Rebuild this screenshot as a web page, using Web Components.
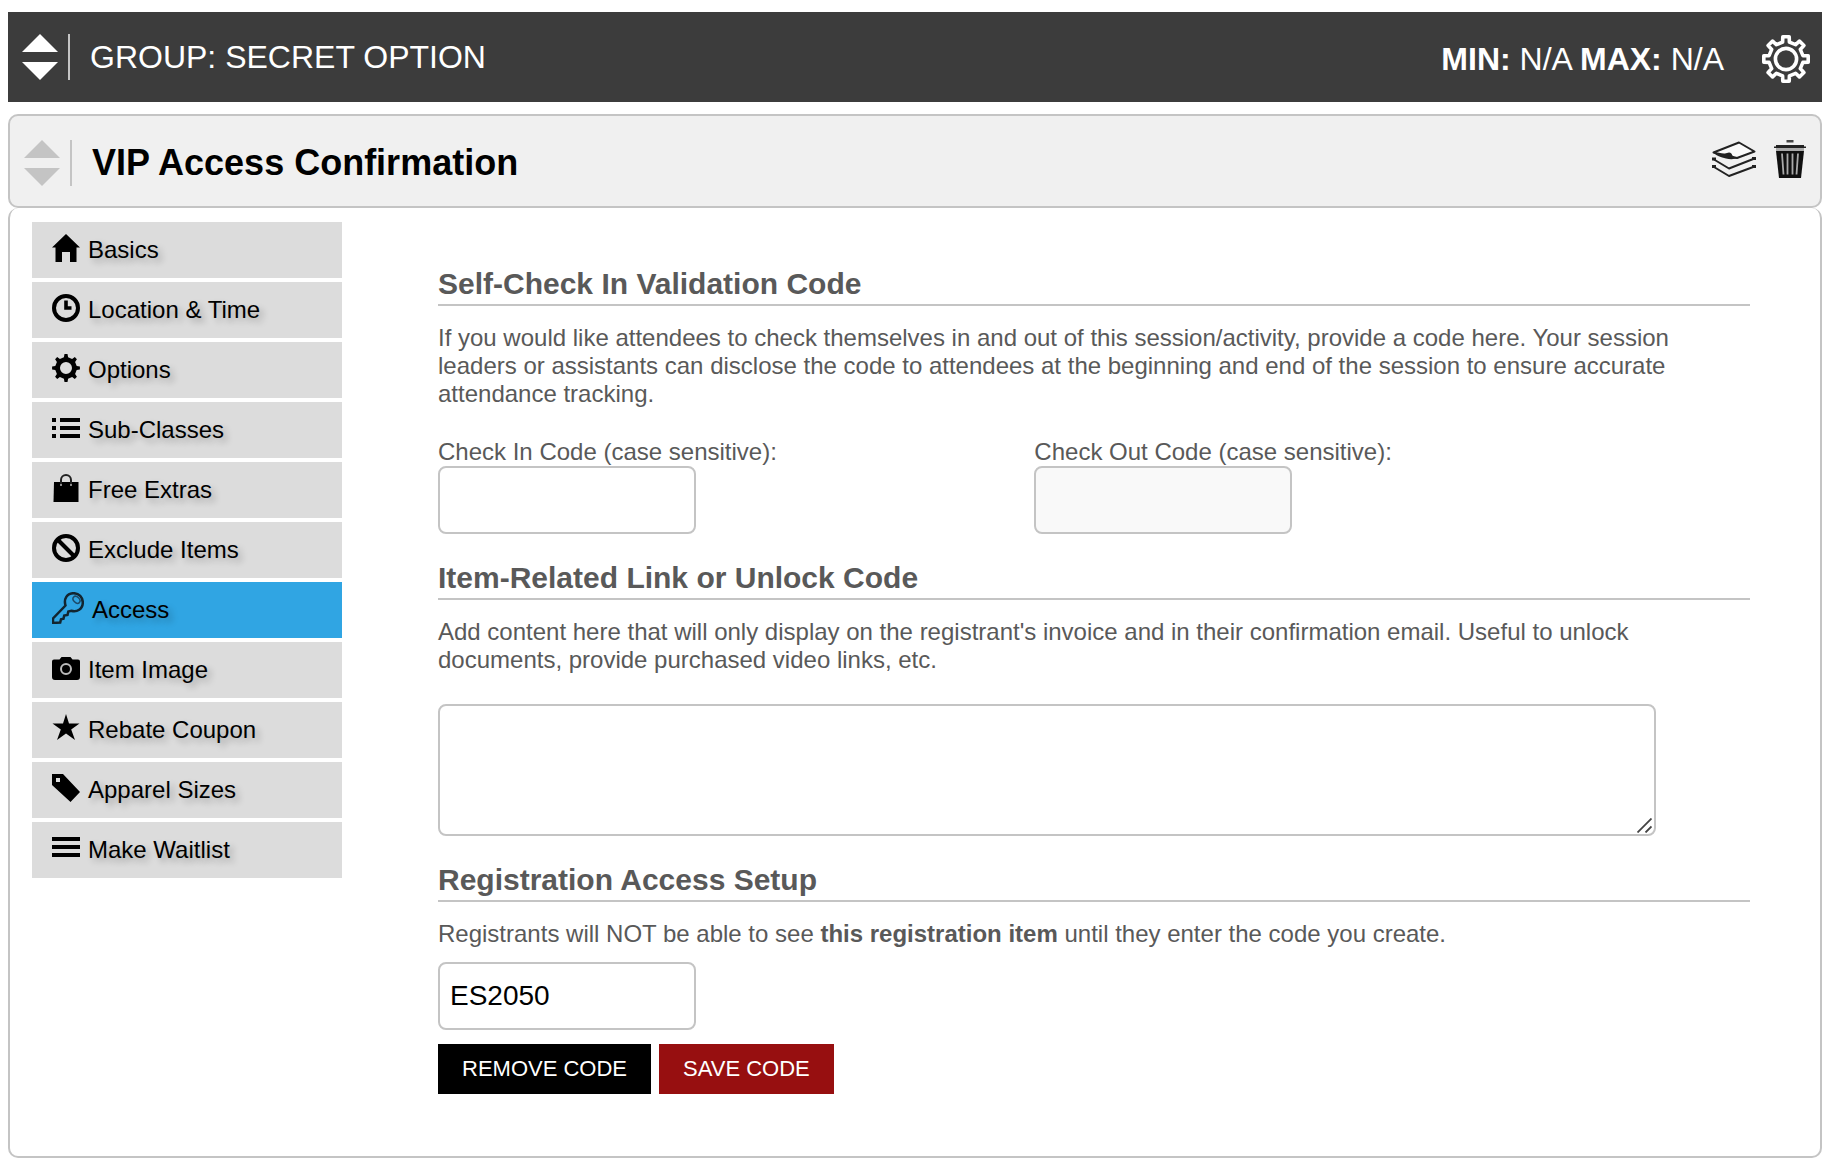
<!DOCTYPE html>
<html lang="en">
<head>
<meta charset="utf-8">
<meta name="viewport" content="width=device-width, initial-scale=1">
<title>VIP Access Confirmation</title>
<style>
  :root { --line: #c4c4c4; --text: #595959; }
  body { margin: 12px 14px 10px 8px; background: #fff; font: 24px/28px "Liberation Sans", Arial, Helvetica, sans-serif; color: var(--text); }
</style>
</head>
<body>
<access-page></access-page>

<script>
(function () {
  // toothed ring outline; tip/root = half widths as a share of one tooth pitch
  function gear(c, n, ro, ri, tip, root) {
    const pts = [], step = Math.PI * 2 / n;
    for (let i = 0; i < n; i++) {
      const a = i * step - Math.PI / 2;
      for (const [r, d] of [[ri, -root], [ro, -tip], [ro, tip], [ri, root]]) pts.push((c + r * Math.cos(a + d * step)).toFixed(1) + " " + (c + r * Math.sin(a + d * step)).toFixed(1));
    }
    return "M" + pts.join("L") + "Z";
  }

  // name: [width, height, markup]
  const ICONS = {
    settings: [48, 48, `<g fill="none" stroke="#fff" stroke-width="3.6" stroke-linejoin="round"><path d="${gear(24, 8, 22.4, 17.2, .18, .25)}"/><circle cx="24" cy="24" r="10.6"/></g>`],
    layers: [44, 36, `<g fill="none" stroke="#222" stroke-width="2" stroke-linejoin="round"><path d="M1.500 11.500 27 1.500 42.500 10.500 25 17z" fill="#fafafa"/><path d="M2 18.500 17 27.500 42.500 17.500M2 26 17 35 42.500 25.500"/></g><path d="M1 11.500Q9 14 17 11.500 20 12 20 14 22 17 27 17 20 19 14 17.500 6 16 1 11.500z" fill="#222"/><path d="M0 16.500h4v3H0zM40 16h4v3h-4zM0 24h4v3H0zM40 24h4v3h-4z" fill="#222"/>`],
    trash: [32, 40, `<path d="M12.500 1h7v2.500h-7z" fill="#444"/><path d="M2 6h28v2H2zM0 7.500h32V9H0z" fill="#222"/><path d="M2 9h28v3H2z" fill="#aaa"/><path d="M2 12h28l-3 27H5z" fill="#111"/><path d="M8 14.500l1.500 21M13.500 14.500v21M18.500 14.500v21M24 14.500l-1.500 21" stroke="#aaa" stroke-width="1.800" fill="none"/>`],
    home: [28, 28, `<path d="M14 0 28 13.500h-3.500V28H18V18h-8v10H3.500V13.500H0z"/>`],
    clock: [28, 28, `<circle cx="14" cy="14" r="12" fill="none" stroke="#000" stroke-width="4"/><path d="M14 6.500V14h5.500" fill="none" stroke="#000" stroke-width="3.600"/>`],
    cog: [28, 28, `<path fill-rule="evenodd" d="${gear(14, 8, 14, 10.9, .14, .25)}M14 8a6 6 0 1 0 0 12 6 6 0 0 0 0-12z"/>`],
    list: [28, 28, `<path d="M0 4h4v4H0zM8 4h20v4H8zM0 12h4v4H0zM8 12h20v4H8zM0 20h4v4H0zM8 20h20v4H8z"/>`],
    bag: [28, 28, `<path d="M2 8h24.500v20H1.500z"/><path d="M9 11V6a5 5 0 0 1 10 0v5" fill="none" stroke="#222" stroke-width="2"/><path d="M8.200 10h1.600v2H8.200zM18.200 10h1.600v2h-1.600z" fill="#aaa"/>`],
    ban: [28, 28, `<circle cx="14" cy="14" r="12" fill="none" stroke="#000" stroke-width="4"/><path d="M5.500 5.500l17 17" stroke="#000" stroke-width="4"/>`],
    key: [32, 32, `<path d="M13.500 13.500C11.500 7 15 1.200 21.500 1.200c5.500 0 9.300 4 9.300 9.300 0 6.500-5.800 10-11.500 8.300l-3 .7-.8 3.500-3.300.6-.7 3.200-2.500.5-.8 3.200L1 31v-4.500z" fill="none" stroke="#122530" stroke-width="2.500"/><ellipse cx="24.500" cy="7.800" rx="4" ry="2.800" transform="rotate(45 24.500 7.800)" fill="none" stroke="#1d4a68" stroke-width="1.500"/>`],
    camera: [28, 28, `<path d="M2 5.500h5.500l2-2.500h9l2 2.500H26q2 0 2 2V23q0 3-3 3H3q-3 0-3-3V7.500q0-2 2-2z"/><circle cx="14" cy="15" r="5" fill="none" stroke="#bbb" stroke-width="2"/>`],
    star: [28, 28, `<path d="M14 0l3 9.500h10.500L19.200 15.500 23 26l-9-6.500L5 26l3.800-10.500L.5 9.500H11z"/>`],
    tag: [28, 28, `<path fill-rule="evenodd" d="M0 0h11l17 18-9.500 10L0 11zM4 4v4h4V4z"/>`],
    bars: [28, 28, `<path d="M0 3h28v4H0zM0 11h28v4H0zM0 19h28v4H0z"/>`],
    grip: [15, 15, `<path d="M.5 14.500l14-14M8.500 14.500l6-6" stroke="#444" stroke-width="1.800"/>`],
  };

  // small helper: open shadow root, box-sizing for all, then the element's own css and markup
  class Base extends HTMLElement {
    connectedCallback() {
      if (this.shadowRoot) return;
      this.attachShadow({ mode: "open" }).innerHTML = `<style>*,*::before,*::after{box-sizing:border-box}${this.css()}</style>${this.html()}`;
    }
    css() { return ":host{display:block}"; }
    html() { return "<slot></slot>"; }
    attr(n) { return this.getAttribute(n) || ""; }
  }

  customElements.define("ui-icon", class extends Base {
    css() { return `:host{display:block;flex:none} svg{display:block}`; }
    html() { const [w, h, body] = ICONS[this.attr("name")]; return `<svg width="${w}" height="${h}" viewBox="0 0 ${w} ${h}" aria-hidden="true">${body}</svg>`; }
  });

  customElements.define("drag-handle", class extends Base {
    css() {
      return `
        :host{display:flex;flex:none;align-items:center;gap:10px;color:#fff}
        button{display:block;padding:0;border:0;background:none;color:inherit;cursor:move}
        svg{display:block;fill:currentColor}
        i{width:2px;height:46px;background:var(--line)}`;
    }
    html() { return `<button aria-label="Move"><svg width="36" height="46"><path d="M18 0l18 18H0zM0 28h36L18 46z"/></svg></button><i></i>`; }
  });

  customElements.define("group-header", class extends Base {
    css() {
      return `
        :host{display:flex;align-items:center;min-height:90px;padding:0 12px 0 14px;background:#3c3c3c;color:#fff;font-size:32px;line-height:36px}
        h1{flex:1;margin:0 0 0 20px;font:inherit}
        .side{display:flex;align-items:center;gap:38px;padding-top:4px}
        button{padding:0;border:0;background:none;cursor:pointer}`;
    }
    html() { return `<drag-handle></drag-handle><h1>${this.attr("heading")}</h1><div class="side"><span><slot></slot></span><button aria-label="Group settings"><ui-icon name="settings"></ui-icon></button></div>`; }
  });

  customElements.define("item-header", class extends Base {
    css() {
      return `
        :host{display:flex;align-items:center;min-height:94px;margin-top:12px;padding:0 14px;border:2px solid var(--line);border-radius:10px;background:#f0f0f0;box-sizing:border-box}
        drag-handle{color:var(--line);padding-top:4px}
        h2{flex:1;margin:0 0 0 20px;padding-top:4px;font-size:36px;line-height:40px;color:#000}
        .side{display:flex;align-items:center;gap:18px;padding-bottom:4px}
        button{padding:0;border:0;background:none;cursor:pointer}`;
    }
    html() { return `<drag-handle></drag-handle><h2><slot></slot></h2><div class="side"><button aria-label="Duplicate"><ui-icon name="layers"></ui-icon></button><button aria-label="Delete"><ui-icon name="trash"></ui-icon></button></div>`; }
  });

  customElements.define("menu-link", class extends Base {
    css() {
      return `
        :host{display:block}
        a{display:flex;align-items:center;gap:8px;min-height:56px;padding:0 20px;background:#dcdcdc;color:#000;text-decoration:none;text-shadow:4px 4px 6px rgba(0,0,0,.25)}
        :host([active]) a{background:#30a5e3}
        ui-icon{padding-bottom:4px}`;
    }
    html() { return `<a href="#${this.attr("icon")}"${this.hasAttribute("active") ? ' aria-current="page"' : ""}><ui-icon name="${this.attr("icon")}"></ui-icon><slot></slot></a>`; }
  });

  customElements.define("side-menu", class extends Base {
    css() { return `:host{display:block;flex:0 0 310px} nav{display:flex;flex-direction:column;gap:4px}`; }
    html() { return `<nav aria-label="Item settings"><slot></slot></nav>`; }
  });

  customElements.define("form-section", class extends Base {
    css() {
      return `
        :host{display:block}
        h3{margin:0 0 18px;padding-bottom:2px;border-bottom:2px solid var(--line);font-size:30px;line-height:36px}
        ::slotted(p){margin:0}`;
    }
    html() { return `<section><h3>${this.attr("heading")}</h3><slot></slot></section>`; }
  });

  customElements.define("code-field", class extends Base {
    css() {
      return `
        :host{display:block}
        label{display:block}
        input{display:block;width:258px;max-width:100%;height:68px;padding:0 10px;border:2px solid var(--line);border-radius:8px;background:#fff;color:#000;font:28px "Liberation Sans",Arial,sans-serif}
        input:disabled{background:#f9f9f9}`;
    }
    html() {
      const label = this.attr("label");
      return `${label ? `<label for="in">${label}</label>` : ""}<input id="in" type="text" value="${this.attr("value")}"${label ? "" : ' aria-label="Access code"'}${this.hasAttribute("disabled") ? " disabled" : ""}>`;
    }
  });

  customElements.define("content-box", class extends Base {
    css() {
      return `
        :host{display:block;position:relative;width:calc(100% - 94px)}
        textarea{display:block;width:100%;height:132px;padding:10px;border:2px solid var(--line);border-radius:8px;background:#fff;color:#000;font:inherit;resize:vertical}
        textarea::-webkit-resizer{background:transparent}
        ui-icon{position:absolute;right:4px;bottom:3px;pointer-events:none}`;
    }
    html() { return `<textarea aria-label="Item-related link or unlock code"></textarea><ui-icon name="grip"></ui-icon>`; }
  });

  customElements.define("action-button", class extends Base {
    css() {
      return `
        :host{display:block}
        button{display:block;height:50px;padding:0 24px;border:0;background:#000;color:#fff;font:22px "Liberation Sans",Arial,sans-serif;cursor:pointer}
        :host([kind=save]) button{background:#970f10}`;
    }
    html() { return `<button type="button"><slot></slot></button>`; }
  });

  customElements.define("access-page", class extends Base {
    css() {
      return `
        :host{display:block}
        main{display:flex;gap:96px;padding:14px 70px 62px 22px;border:2px solid var(--line);border-top:0;border-radius:10px}
        .content{flex:1;min-width:0;display:flex;flex-direction:column;gap:26px;padding-top:44px}
        .codes{display:grid;grid-template-columns:5fr 6fr;margin-top:30px}
        content-box{margin-top:30px}
        .access{margin-top:14px}
        .buttons{display:flex;gap:8px;margin-top:14px}`;
    }
    html() {
      return `
        <group-header heading="GROUP: SECRET OPTION"><b>MIN:</b> N/A <b>MAX:</b> N/A</group-header>
        <item-header>VIP Access Confirmation</item-header>
        <main>
          <side-menu>
            <menu-link icon="home">Basics</menu-link>
            <menu-link icon="clock">Location &amp; Time</menu-link>
            <menu-link icon="cog">Options</menu-link>
            <menu-link icon="list">Sub-Classes</menu-link>
            <menu-link icon="bag">Free Extras</menu-link>
            <menu-link icon="ban">Exclude Items</menu-link>
            <menu-link icon="key" active>Access</menu-link>
            <menu-link icon="camera">Item Image</menu-link>
            <menu-link icon="star">Rebate Coupon</menu-link>
            <menu-link icon="tag">Apparel Sizes</menu-link>
            <menu-link icon="bars">Make Waitlist</menu-link>
          </side-menu>
          <div class="content">
            <form-section heading="Self-Check In Validation Code">
              <p>If you would like attendees to check themselves in and out of this session/activity, provide a code here. Your session leaders or assistants can disclose the code to attendees at the beginning and end of the session to ensure accurate attendance tracking.</p>
              <div class="codes">
                <code-field label="Check In Code (case sensitive):"></code-field>
                <code-field label="Check Out Code (case sensitive):" disabled></code-field>
              </div>
            </form-section>
            <form-section heading="Item-Related Link or Unlock Code">
              <p>Add content here that will only display on the registrant's invoice and in their confirmation email. Useful to unlock documents, provide purchased video links, etc.</p>
              <content-box></content-box>
            </form-section>
            <form-section heading="Registration Access Setup">
              <p>Registrants will NOT be able to see <b>this registration item</b> until they enter the code you create.</p>
              <code-field class="access" value="ES2050"></code-field>
              <div class="buttons">
                <action-button>REMOVE CODE</action-button>
                <action-button kind="save">SAVE CODE</action-button>
              </div>
            </form-section>
          </div>
        </main>`;
    }
  });
})();
</script>
</body>
</html>
